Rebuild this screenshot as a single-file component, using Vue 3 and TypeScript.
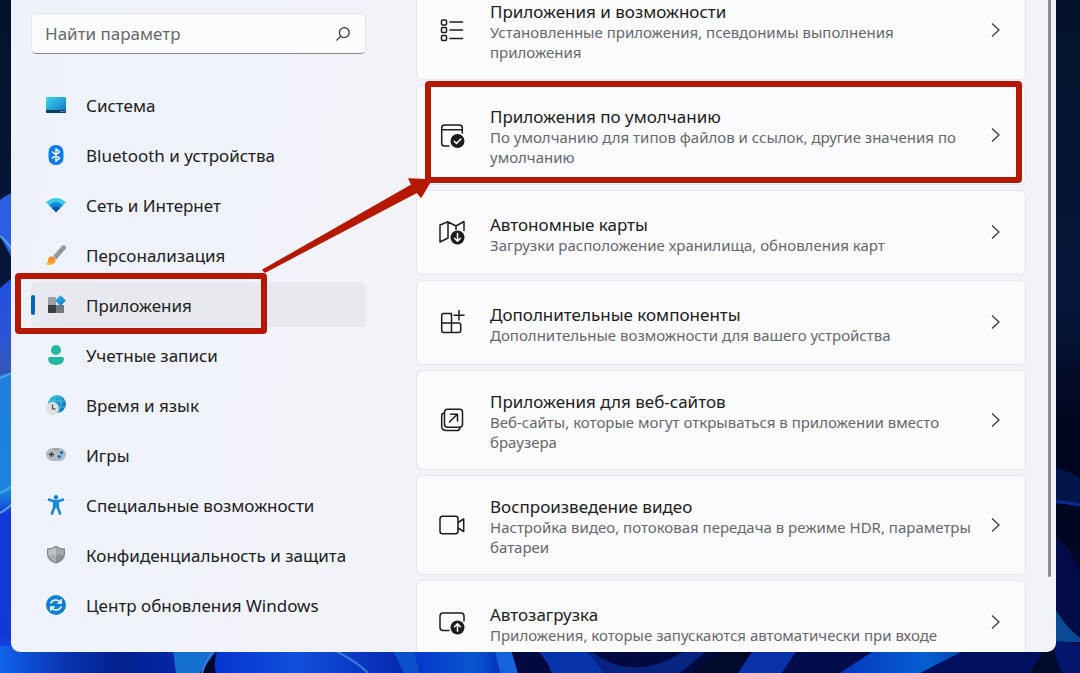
<script setup lang="ts">
import { ref } from 'vue'

interface NavItem {
  id: string
  label: string
}
interface AppCard {
  id: string
  title: string
  text: string
}

const navItems: NavItem[] = [
  { id: 'system', label: 'Система' },
  { id: 'bluetooth', label: 'Bluetooth и устройства' },
  { id: 'network', label: 'Сеть и Интернет' },
  { id: 'personal', label: 'Персонализация' },
  { id: 'apps', label: 'Приложения' },
  { id: 'accounts', label: 'Учетные записи' },
  { id: 'time', label: 'Время и язык' },
  { id: 'games', label: 'Игры' },
  { id: 'access', label: 'Специальные возможности' },
  { id: 'privacy', label: 'Конфиденциальность и защита' },
  { id: 'update', label: 'Центр обновления Windows' },
]

const cards: AppCard[] = [
  { id: 'features', title: 'Приложения и возможности', text: 'Установленные приложения, псевдонимы выполнения приложения' },
  { id: 'defaults', title: 'Приложения по умолчанию', text: 'По умолчанию для типов файлов и ссылок, другие значения по умолчанию' },
  { id: 'maps', title: 'Автономные карты', text: 'Загрузки расположение хранилища, обновления карт' },
  { id: 'optional', title: 'Дополнительные компоненты', text: 'Дополнительные возможности для вашего устройства' },
  { id: 'websites', title: 'Приложения для веб-сайтов', text: 'Веб-сайты, которые могут открываться в приложении вместо браузера' },
  { id: 'video', title: 'Воспроизведение видео', text: 'Настройка видео, потоковая передача в режиме HDR, параметры батареи' },
  { id: 'startup', title: 'Автозагрузка', text: 'Приложения, которые запускаются автоматически при входе' },
]

const active = ref('apps')
const query = ref('')
</script>

<template>
  <div class="desktop">
    <svg class="wallpaper" viewBox="0 0 1080 673" preserveAspectRatio="none" aria-hidden="true">
      <defs>
        <linearGradient id="wp-base" x1="0" y1="0" x2="0" y2="1">
          <stop offset="0" stop-color="#04122b" />
          <stop offset="0.45" stop-color="#06173a" />
          <stop offset="0.65" stop-color="#01041c" />
          <stop offset="1" stop-color="#010a2c" />
        </linearGradient>
        <linearGradient id="wp-left" x1="0" y1="0" x2="0" y2="1">
          <stop offset="0" stop-color="#1f50e0" />
          <stop offset="0.14" stop-color="#2b55d8" />
          <stop offset="0.24" stop-color="#3457b4" />
          <stop offset="0.25" stop-color="#1f7fdc" />
          <stop offset="0.54" stop-color="#1a86dc" />
          <stop offset="0.6" stop-color="#1538d8" />
          <stop offset="0.9" stop-color="#1237d6" />
          <stop offset="1" stop-color="#1062ec" />
        </linearGradient>
        <linearGradient id="wp-a" x1="0" y1="0" x2="1" y2="0">
          <stop offset="0" stop-color="#1262ec" />
          <stop offset="0.35" stop-color="#0a35b4" />
          <stop offset="0.65" stop-color="#03208c" />
          <stop offset="1" stop-color="#0427a8" />
        </linearGradient>
        <linearGradient id="wp-b" x1="0" y1="0" x2="1" y2="0">
          <stop offset="0" stop-color="#0434d0" />
          <stop offset="0.4" stop-color="#1350dc" />
          <stop offset="1" stop-color="#0222a8" />
        </linearGradient>
        <linearGradient id="wp-c" x1="0" y1="0" x2="1" y2="0">
          <stop offset="0" stop-color="#0536cc" />
          <stop offset="0.7" stop-color="#0a56cc" />
          <stop offset="1" stop-color="#0432c0" />
        </linearGradient>
        <linearGradient id="wp-d" x1="0" y1="0" x2="1" y2="0">
          <stop offset="0" stop-color="#0536bc" />
          <stop offset="0.6" stop-color="#0660d0" />
          <stop offset="1" stop-color="#033090" />
        </linearGradient>
      </defs>
      <rect width="1080" height="673" fill="url(#wp-base)" />
      <path d="M0 200Q6 195 12 193V258L0 236Z" fill="#2a60e4" />
      <path d="M0 288L12 278V673H0Z" fill="url(#wp-left)" />
      <path d="M0 236Q7 241 12 250M0 378L12 373M0 493Q7 490 12 486M0 513Q7 509 12 504" fill="none" stroke="#4ea7e6" stroke-width="2" />
      <rect y="646" width="180" height="27" fill="url(#wp-a)" />
      <path d="M172 640H224L200 673H176Z" fill="#1370cc" />
      <path d="M222 640Q212 658 216 673H420L400 640Z" fill="url(#wp-b)" />
      <path d="M202 673Q208 652 226 640M310 640Q350 655 368 673" fill="none" stroke="#3c78dc" stroke-width="2" />
      <path d="M388 640L404 673H420L412 640Z" fill="#0a50cc" />
      <path d="M412 640L420 673H500L492 640Z" fill="url(#wp-c)" />
      <path d="M492 640L500 673H518L508 640Z" fill="#1462dc" />
      <path d="M510 640L518 673H690L740 640Z" fill="#010a40" />
      <path d="M526 640Q545 654 552 673H604Q592 652 572 640Z" fill="#0734a8" />
      <path d="M580 640Q630 695 700 640H720L680 673H604Z" fill="#062480" />
      <path d="M606 640Q635 662 674 640Z" fill="#01061e" />
      <path d="M760 640L738 673H782L804 640Z" fill="#0a32a8" />
      <path d="M804 640L782 673H850L880 640Z" fill="#020c4a" />
      <path d="M890 640L840 673H928L985 640Z" fill="url(#wp-d)" />
      <path d="M985 640L920 673H1030L1050 640Z" fill="#021060" />
      <path d="M1050 466Q1067 470 1080 478V506Q1068 503 1050 503Z" fill="#03164c" />
      <path d="M1050 501Q1066 502 1080 505" fill="none" stroke="#0a2c92" stroke-width="3" />
      <path d="M1050 532Q1068 544 1080 570V640Q1066 624 1050 600Z" fill="#020a48" />
      <path d="M1050 600Q1064 626 1080 638V642H1050Z" fill="#0a4a94" />
      <path d="M1050 641Q1068 641 1080 644V673H1062Z" fill="#03166c" />
    </svg>

    <div class="window">
      <aside class="sidebar">
        <form class="search" role="search" @submit.prevent>
          <input v-model="query" class="search-input" type="text" aria-label="Найти параметр" placeholder="Найти параметр" />
          <button class="search-btn" type="submit" aria-label="Поиск">
            <svg viewBox="0 0 14 14" width="14" height="14" fill="none" stroke="#2a2a2a" stroke-width="1.2" stroke-linecap="round">
              <circle cx="8.3" cy="5.6" r="4.9" />
              <path d="M4.8 9.2L.8 13.2" />
            </svg>
          </button>
        </form>

        <nav class="nav" aria-label="Параметры">
          <button
            v-for="item in navItems"
            :key="item.id"
            type="button"
            class="nav-item"
            :class="{ active: active === item.id }"
            :aria-current="active === item.id ? 'page' : undefined"
            @click="active = item.id"
          >
            <svg class="nav-icon" viewBox="0 0 20 20" aria-hidden="true">
              <template v-if="item.id === 'system'">
                <defs>
                  <linearGradient id="g-sys" x1="0" y1="0" x2="1" y2="1">
                    <stop offset="0" stop-color="#3fdbe6" />
                    <stop offset="1" stop-color="#0b6fc4" />
                  </linearGradient>
                </defs>
                <rect y="2" width="20" height="16" rx="1" fill="url(#g-sys)" />
                <path d="M0 15H20V17a1 1 0 0 1-1 1H1a1 1 0 0 1-1-1Z" fill="#0b3f5e" />
                <path d="M15 16h1v1h-1zM17.500 16h1v1h-1z" fill="#d4f0fa" />
              </template>
              <template v-else-if="item.id === 'bluetooth'">
                <rect x="2.500" y="0" width="15" height="20" rx="7" fill="#0a7cf0" />
                <path d="M6 6.500L13.500 13.300L10 16.300V3.700L13.500 6.700L6 13.500" fill="none" stroke="#fff" stroke-width="1.400" stroke-linejoin="round" />
              </template>
              <template v-else-if="item.id === 'network'">
                <path d="M0 7.300Q10-1.500 20 7.300L10 17.300Z" fill="#40c6ee" />
                <path d="M3 10.300Q10 4 17 10.300L10 17.300Z" fill="#1488d6" />
                <path d="M5.800 13Q10 9.600 14.200 13L10 17.300Z" fill="#0b55a4" />
              </template>
              <template v-else-if="item.id === 'personal'">
                <defs>
                  <linearGradient id="g-brush" x1="0" y1="0" x2="1" y2="1">
                    <stop offset="0" stop-color="#b9bec4" />
                    <stop offset="1" stop-color="#6b7178" />
                  </linearGradient>
                  <linearGradient id="g-tip" x1="0" y1="0" x2="0" y2="1">
                    <stop offset="0" stop-color="#ee7d18" />
                    <stop offset="1" stop-color="#fbb03a" />
                  </linearGradient>
                </defs>
                <path d="M7 11L16 .8Q17.700-.6 19.200.8Q20.500 2.200 19.500 4L10.200 14.400Z" fill="url(#g-brush)" />
                <path d="M7.200 10.800L10.400 14.200L8.800 15.800L5.600 12.200Z" fill="#d8dadd" />
                <path d="M5.600 11.500Q9.900 12 9.500 16Q8.200 19.900 2.500 19.900Q.8 19.900 0 19Q2.200 18 2 15.500Q2.300 11.700 5.600 11.500Z" fill="url(#g-tip)" />
              </template>
              <template v-else-if="item.id === 'apps'">
                <defs>
                  <linearGradient id="g-app" x1="0" y1="0" x2="1" y2="1">
                    <stop offset="0" stop-color="#37b7f2" />
                    <stop offset="1" stop-color="#0b78d0" />
                  </linearGradient>
                </defs>
                <path d="M3 2H10V10H2V3Q2 2 3 2Z" fill="#99a0a6" />
                <path d="M2 10H10V18H3Q2 18 2 17Z" fill="#3b3f43" />
                <path d="M10 10H18V17Q18 18 17 18H10Z" fill="#71777d" />
                <path d="M14.500.8L19.300 5.600L14.500 10.500L9.700 5.600Z" fill="url(#g-app)" stroke="url(#g-app)" stroke-linejoin="round" />
              </template>
              <template v-else-if="item.id === 'accounts'">
                <circle cx="10" cy="5" r="5" fill="#23b8a2" />
                <path d="M3.500 12H16.500Q18 12 18 13.500Q18 20 10 20T2 13.500Q2 12 3.500 12Z" fill="#23b8a2" />
              </template>
              <template v-else-if="item.id === 'time'">
                <defs>
                  <linearGradient id="g-globe" x1="0" y1="0" x2="1" y2="1">
                    <stop offset="0" stop-color="#2fc8d8" />
                    <stop offset="1" stop-color="#0b66b8" />
                  </linearGradient>
                </defs>
                <circle cx="11" cy="9" r="9" fill="url(#g-globe)" />
                <path d="M3 6H19.500M8 12H19.500M11 0Q5.500 5 8 12M12 0Q18.500 9 12 18" fill="none" stroke="#5cc8e2" stroke-width=".7" />
                <circle cx="6.500" cy="13.500" r="6.500" fill="#dddfe2" />
                <path d="M6.500 9.500V13.800H9.500" fill="none" stroke="#4a4f54" stroke-width="1.200" />
              </template>
              <template v-else-if="item.id === 'games'">
                <rect y="3" width="20" height="13" rx="6.500" fill="#b3b9bf" />
                <path d="M5.500 7V12M3 9.500H8" stroke="#33373b" stroke-width="1.300" />
                <path d="M8 4.200H9.200M10.800 4.200H12" stroke="#45494d" stroke-width="1" />
                <circle cx="15.500" cy="7.600" r="1.700" fill="#0b72c8" />
                <circle cx="13.300" cy="11.600" r="1.700" fill="#0b72c8" />
              </template>
              <template v-else-if="item.id === 'access'">
                <circle cx="10" cy="2.200" r="2.200" fill="#1583d0" />
                <path d="M3 4.700L8.300 6.300H11.700L17 4.700M10 6V12M8.200 6.500V12L6 18.700M11.800 6.500V12L14 18.700" fill="none" stroke="#168ad8" stroke-width="2.600" stroke-linecap="round" stroke-linejoin="round" />
              </template>
              <template v-else-if="item.id === 'privacy'">
                <path d="M10 .8Q13.500 3.500 19 3.500V9Q19 15.500 10 18.800Q1 15.500 1 9V3.500Q6.500 3.500 10 .8Z" fill="#80868c" />
                <path d="M10 2.300Q6.800 4.600 2.200 4.800V10H10Z" fill="#bcc1c6" />
                <path d="M10 2.300Q13.200 4.600 17.800 4.800V10H10Z" fill="#a3a9ae" />
                <path d="M2.200 10Q3 14.600 10 17.500V10Z" fill="#a9aeb3" />
                <path d="M17.800 10Q17 14.600 10 17.500V10Z" fill="#8c9298" />
              </template>
              <template v-else>
                <circle cx="10" cy="10" r="10" fill="#1180d4" />
                <path d="M4.600 8.300Q6.300 5 10 5Q13 5 14.800 7.500M15.400 11.700Q13.700 15 10 15Q7 15 5.200 12.500M15.200 4.200V8H11.400M4.800 15.800V12H8.600" fill="none" stroke="#fff" stroke-width="1.500" />
              </template>
            </svg>
            <span class="nav-label">{{ item.label }}</span>
            <span v-if="item.id === 'apps'" class="mark mark-nav"></span>
          </button>
        </nav>
      </aside>

      <main class="content">
        <button v-for="card in cards" :key="card.id" type="button" class="card">
          <svg class="card-icon" viewBox="0 0 28 28" fill="none" stroke="#1c1c1c" stroke-width="1.500" stroke-linecap="round" stroke-linejoin="round" aria-hidden="true">
            <template v-if="card.id === 'features'">
              <rect x="2.500" y="4" width="5" height="5" rx="1" />
              <rect x="2.500" y="11.500" width="5" height="5" rx="1" />
              <rect x="2.500" y="19.500" width="5" height="5" rx="1" />
              <path d="M11 6H23.500M11 14H23.500M11 22.500H23.500" />
            </template>
            <template v-else-if="card.id === 'defaults'">
              <path d="M10 25H5.500Q2.700 25 2.700 22.200V7Q2.700 4 5.500 4H20.500Q23.300 4 23.300 7V12M2.700 8.700H23.300" />
              <circle cx="18.500" cy="20" r="7" fill="#1c1c1c" stroke="none" />
              <path d="M15.200 20.200L17.500 22.500L21.800 18" stroke="#fff" />
            </template>
            <template v-else-if="card.id === 'maps'">
              <path d="M9 3.800L1 7V24L9 20ZM9 3.800L17 8V11.500M17 8L25 3.500V12.500" />
              <circle cx="18.500" cy="19.500" r="7" fill="#1c1c1c" stroke="none" />
              <path d="M18.500 15.500V23M15.500 20.300L18.500 23.200L21.500 20.300" stroke="#fff" />
            </template>
            <template v-else-if="card.id === 'optional'">
              <path d="M12.500 5.500H4.700Q2.700 5.500 2.700 7.500V22.500Q2.700 24.500 4.700 24.500H19.500Q21.700 24.500 21.700 22.500V17Q21.700 15 19.500 15H2.700M12.500 24.500V7.500Q12.500 5.500 10.500 5.500M20 2.500V12M15 7.200H25" />
            </template>
            <template v-else-if="card.id === 'websites'">
              <rect x="5.500" y="3.200" width="18" height="18" rx="3" />
              <path d="M5 7Q2.700 7.500 2.700 10V20Q2.700 24.500 7.200 24.500H18Q20.500 24.500 21 22M10.500 16L18.200 8.300M11.500 8.300H18.500V15" />
            </template>
            <template v-else-if="card.id === 'video'">
              <rect x="1" y="5.200" width="18" height="17.500" rx="2.500" />
              <path d="M19 11.500L24.700 8V20.500L19 17" />
            </template>
            <template v-else>
              <path d="M10 22.500H4Q1 22.500 1 19.500V8Q1 5 4 5H22Q25 5 25 8V13" />
              <circle cx="18.500" cy="19.500" r="7" fill="#1c1c1c" stroke="none" />
              <path d="M18.500 23.200V16M15.500 18.800L18.500 15.900L21.500 18.800" stroke="#fff" />
            </template>
          </svg>
          <span class="card-body">
            <span class="card-title">{{ card.title }}</span>
            <span class="card-text">{{ card.text }}</span>
          </span>
          <svg class="chevron" viewBox="0 0 9 14" fill="none" stroke="#3c3c3c" stroke-width="1.300" aria-hidden="true">
            <path d="M1 .5L8 7L1 13.500" />
          </svg>
          <span v-if="card.id === 'defaults'" class="mark mark-card"></span>
        </button>
      </main>

      <div class="scrollbar"></div>

      <svg class="arrow" viewBox="0 0 172 98" aria-hidden="true">
        <path d="M1 94L150 9L147 3L169 4L159 21L155 16L3 96Z" fill="#b51800" stroke="#b51800" stroke-width="1.500" stroke-linejoin="round" />
      </svg>
    </div>
  </div>
</template>

<style>
html,
body {
  margin: 0;
}
</style>

<style scoped>
.desktop {
  position: relative;
  box-sizing: border-box;
  height: 100vh;
  padding: 0 24px 21px 11px;
  overflow: hidden;
  font-family: 'Noto Sans', 'Open Sans', sans-serif;
  color: #202020;
}
.wallpaper {
  position: absolute;
  inset: 0;
  width: 100%;
  height: 100%;
}
.window {
  position: relative;
  display: flex;
  box-sizing: border-box;
  height: 100%;
  overflow: hidden;
  border-radius: 0 0 9px 9px;
  background: linear-gradient(100deg, #eef2fb 0%, #f1f3f9 30%, #f1f3f8 100%);
}
.sidebar {
  flex: 0 0 335px;
  padding: 13px 0 0 20px;
}
.search {
  display: flex;
  align-items: center;
  box-sizing: border-box;
  height: 41px;
  margin-bottom: 28px;
  padding: 0 15px 0 13px;
  border: 1px solid #e1e3e8;
  border-bottom-color: #85878b;
  border-radius: 5px;
  background: #fbfcfe;
}
.search-input {
  flex: 1;
  min-width: 0;
  padding: 0;
  border: 0;
  outline: 0;
  background: transparent;
  color: #1b1b1b;
  font: inherit;
  font-size: 17px;
}
.search-input::placeholder {
  color: #66686b;
  opacity: 1;
}
.search-btn {
  display: flex;
  padding: 0;
  border: 0;
  background: transparent;
}
.nav {
  display: flex;
  flex-direction: column;
  gap: 5px;
}
.nav-item {
  position: relative;
  display: flex;
  align-items: center;
  gap: 20px;
  height: 45px;
  padding: 0 15px;
  border: 0;
  border-radius: 5px;
  background: transparent;
  color: inherit;
  font: inherit;
  font-size: 17px;
  text-align: left;
  white-space: nowrap;
}
.nav-item.active {
  background: #e8e9ee;
}
.nav-item.active::before {
  content: '';
  position: absolute;
  left: 0;
  top: 13px;
  width: 4px;
  height: 20px;
  border-radius: 2px;
  background: #0b63b4;
}
.nav-icon {
  flex: none;
  width: 20px;
  height: 20px;
  overflow: visible;
}
.nav-label {
  padding-top: 2px;
}
.content {
  display: flex;
  flex: 1;
  flex-direction: column;
  gap: 5px;
  min-width: 0;
  margin-top: -20px;
  padding: 0 22px 0 50px;
}
.card {
  position: relative;
  display: flex;
  flex: none;
  align-items: center;
  box-sizing: border-box;
  min-height: 85px;
  padding: 16px 25px 17px 22px;
  border: 1px solid #e4e6ec;
  border-radius: 6px;
  background: #fbfbfd;
  color: inherit;
  font: inherit;
  text-align: left;
}
.card-icon {
  flex: none;
  width: 28px;
  height: 28px;
  margin-right: 23px;
}
.card-body {
  display: flex;
  flex: 1;
  flex-direction: column;
  min-width: 0;
  padding-top: 4px;
}
.card-title {
  font-size: 17px;
  line-height: 21px;
}
.card-text {
  color: #66676a;
  font-size: 15px;
  line-height: 20px;
}
.chevron {
  flex: none;
  width: 9px;
  height: 14px;
  margin-left: 16px;
}
.scrollbar {
  flex: none;
  width: 3px;
  height: 577px;
  margin-right: 5px;
  border-radius: 0 0 2px 2px;
  background: #8b8d91;
}
.mark {
  position: absolute;
  border: 6px solid #b51800;
  border-radius: 4px;
  pointer-events: none;
}
.mark-nav {
  inset: -9px 99px -7px -16px;
}
.mark-card {
  inset: -5px 3px 1px 8px;
}
.arrow {
  position: absolute;
  top: 176px;
  left: 251px;
  width: 172px;
  height: 98px;
  pointer-events: none;
}
</style>
